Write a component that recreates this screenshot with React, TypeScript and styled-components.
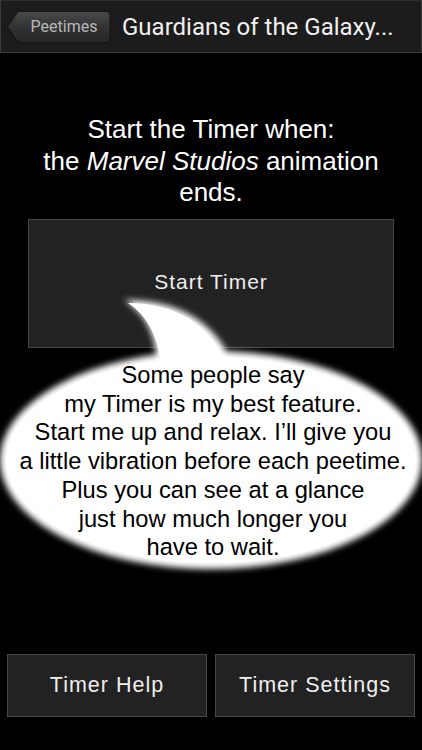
import React from "react";
import styled, { createGlobalStyle } from "styled-components";

const Global = createGlobalStyle`
  html, body { margin: 0; padding: 0; background: #000; }
  body { font-family: "Liberation Sans", Arial, sans-serif; }
  * { box-sizing: border-box; }
`;

const Page = styled.div`
  position: relative;
  width: 422px;
  height: 750px;
  background: #000;
  display: flex;
  flex-direction: column;
  overflow: hidden;
`;

const Header = styled.header`
  height: 53px;
  background: #1c1c1c;
  border: 1px solid #3a3a3a;
  border-top-color: #2e2e2e;
  display: flex;
  align-items: center;
  padding-left: 6px;
  gap: 11px;
`;

const BackButton = styled.button`
  position: relative;
  height: 34px;
  width: 104px;
  margin: 0;
  padding: 0 0 0 10px;
  border: none;
  background: transparent;
  color: #b8b8b8;
  font-family: Roboto, "Liberation Sans", sans-serif;
  font-size: 16px;
  display: flex;
  align-items: center;
  justify-content: center;
  svg {
    position: absolute;
    inset: 0;
  }
  span {
    position: relative;
  }
`;

const Title = styled.h1`
  margin: 0;
  color: #f0f0f0;
  font-family: Roboto, "Liberation Sans", sans-serif;
  font-weight: 400;
  font-size: 24px;
  white-space: nowrap;
`;

const Instruction = styled.p`
  margin: 61px auto 0;
  width: 380px;
  color: #fff;
  text-align: center;
  font-size: 26px;
  line-height: 31.5px;
  em { font-style: italic; }
`;

const StartButton = styled.button`
  margin: 10px 0 0 28px;
  width: 366px;
  height: 129px;
  background: #222;
  border: 1px solid #464646;
  color: #eee;
  font-family: "Liberation Sans", Arial, sans-serif;
  font-size: 21px;
  letter-spacing: 1px;
  padding: 0 0 2px;
`;

const BottomRow = styled.div`
  margin-top: auto;
  margin-bottom: 33px;
  padding: 0 7px;
  display: grid;
  grid-template-columns: 200px 200px;
  gap: 8px;
`;

const BottomButton = styled.button`
  height: 63px;
  background: #222;
  border: 1px solid #484848;
  color: #eee;
  font-family: "Liberation Sans", Arial, sans-serif;
  font-size: 21.5px;
  letter-spacing: 1px;
  padding: 0;
`;

const Bubble = styled.div`
  position: absolute;
  left: 0;
  top: 290px;
  width: 422px;
  height: 290px;
  svg {
    position: absolute;
    inset: 0;
  }
`;

const BubbleText = styled.p`
  position: relative;
  margin: 0;
  padding-top: 71px;
  padding-left: 4px;
  text-align: center;
  color: #000;
  font-family: "Liberation Sans", Arial, sans-serif;
  font-size: 23.7px;
  line-height: 28.7px;
  white-space: nowrap;
`;

const lines = [
  "Some people say",
  "my Timer is my best feature.",
  "Start me up and relax. I\u2019ll give you",
  "a little vibration before each peetime.",
  "Plus you can see at a glance",
  "just how much longer you",
  "have to wait.",
];

export default function App() {
  return (
    <Page>
      <Global />
      <Header>
        <BackButton>
          <svg width="104" height="34" viewBox="0 0 104 34">
            <defs>
              <linearGradient id="bg" x1="0" y1="0" x2="0" y2="1">
                <stop offset="0" stopColor="#4a4a4a" />
                <stop offset="0.5" stopColor="#333" />
                <stop offset="1" stopColor="#262626" />
              </linearGradient>
            </defs>
            <path
              d="M0.5 17 L11 1.5 L99 1.5 Q103 1.5 103 5.5 L103 28.5 Q103 32.5 99 32.5 L11 32.5 Z"
              fill="url(#bg)"
              stroke="#151515"
              strokeWidth="1"
            />
          </svg>
          <span>Peetimes</span>
        </BackButton>
        <Title>Guardians of the Galaxy...</Title>
      </Header>
      <Instruction>
        Start the Timer when:
        <br />
        the <em>Marvel Studios</em> animation ends.
      </Instruction>
      <StartButton>Start Timer</StartButton>
      <BottomRow>
        <BottomButton>Timer Help</BottomButton>
        <BottomButton>Timer Settings</BottomButton>
      </BottomRow>
      <Bubble>
        <svg width="422" height="290" viewBox="0 290 422 290">
          <defs>
            <filter id="glow" x="-10%" y="-10%" width="120%" height="120%">
              <feGaussianBlur stdDeviation="3" />
            </filter>
          </defs>
          <g filter="url(#glow)" fill="#fff">
            <ellipse cx="211" cy="460" rx="211" ry="109" />
            <path d="M124 300 Q200 300 229 356 L157 360 Q154 318 124 300 Z" />
          </g>
          <g fill="#fff">
            <ellipse cx="211" cy="460" rx="205" ry="103" />
            <path d="M128 303 Q198 304 225 360 L161 364 Q156 321 128 303 Z" />
          </g>
        </svg>
        <BubbleText>
          {lines.map((l, i) => (
            <React.Fragment key={i}>
              {l}
              <br />
            </React.Fragment>
          ))}
        </BubbleText>
      </Bubble>
    </Page>
  );
}
